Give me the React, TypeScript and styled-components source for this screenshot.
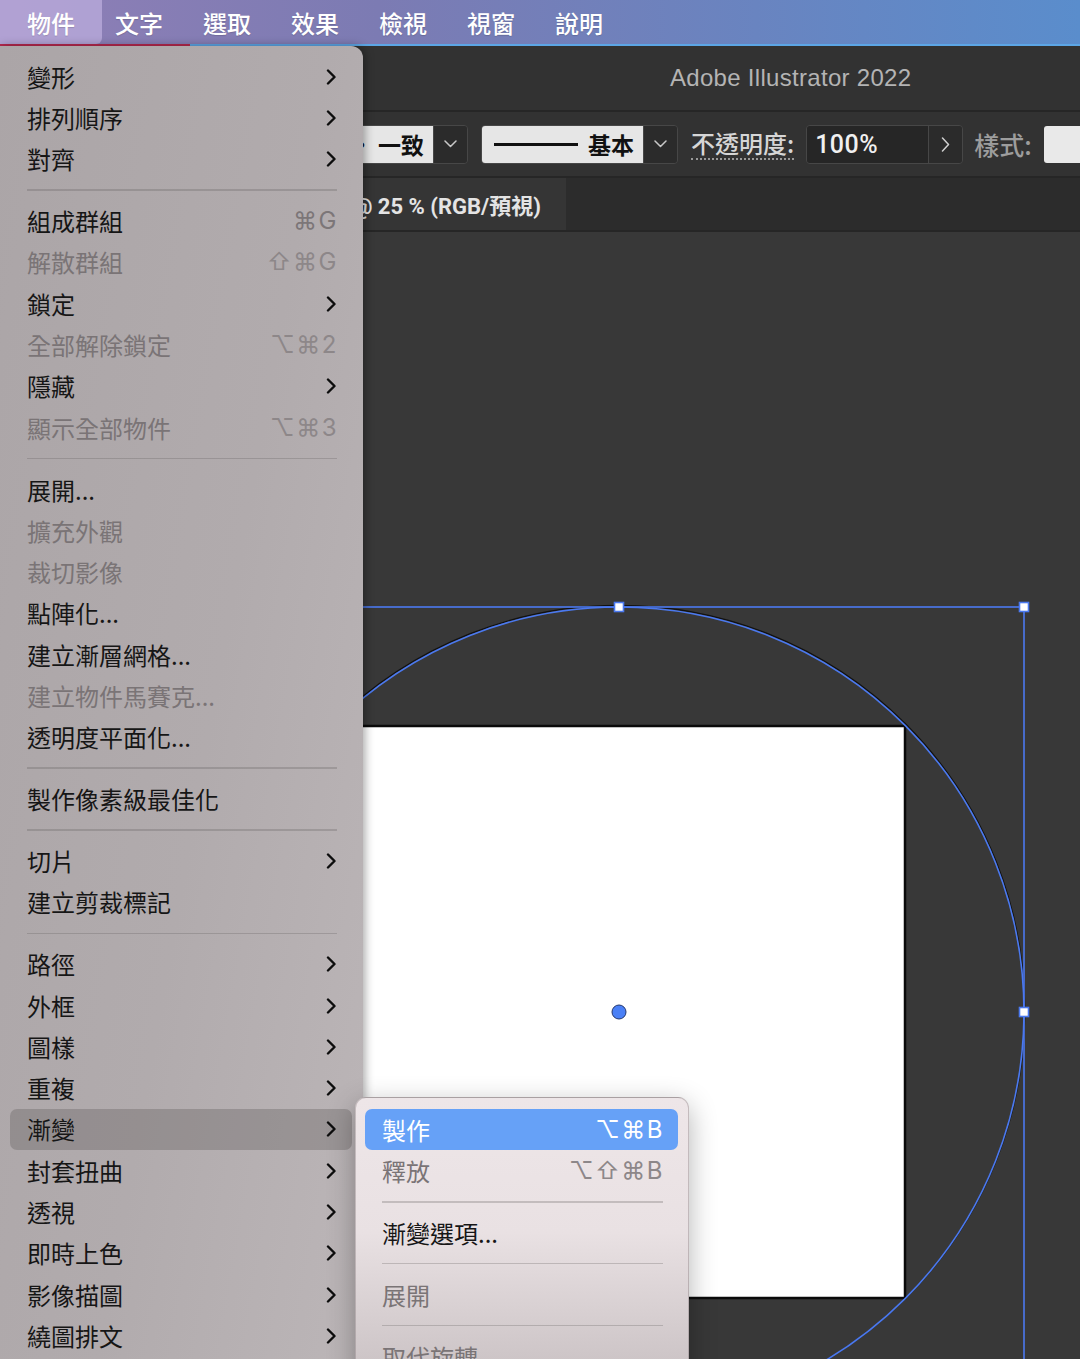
import React, { FC } from 'react';
import styled, { createGlobalStyle } from 'styled-components';

const GlobalStyle = createGlobalStyle`
  html, body {
    margin: 0;
    padding: 0;
    background: #383838;
    overflow: hidden;
  }
`;

const CJK = '"Noto Sans CJK TC", "Noto Sans", sans-serif';
const KEYS = '"Inter", "DejaVu Sans", "Noto Sans CJK TC", sans-serif';

type MenuEntry =
  | 'sep'
  | { label: string; disabled?: boolean; shortcut?: string; submenu?: boolean; active?: boolean };

const mainMenu: MenuEntry[] = [
  { label: '變形', submenu: true },
  { label: '排列順序', submenu: true },
  { label: '對齊', submenu: true },
  'sep',
  { label: '組成群組', shortcut: '⌘G' },
  { label: '解散群組', shortcut: '⇧⌘G', disabled: true },
  { label: '鎖定', submenu: true },
  { label: '全部解除鎖定', shortcut: '⌥⌘2', disabled: true },
  { label: '隱藏', submenu: true },
  { label: '顯示全部物件', shortcut: '⌥⌘3', disabled: true },
  'sep',
  { label: '展開...' },
  { label: '擴充外觀', disabled: true },
  { label: '裁切影像', disabled: true },
  { label: '點陣化...' },
  { label: '建立漸層網格...' },
  { label: '建立物件馬賽克...', disabled: true },
  { label: '透明度平面化...' },
  'sep',
  { label: '製作像素級最佳化' },
  'sep',
  { label: '切片', submenu: true },
  { label: '建立剪裁標記' },
  'sep',
  { label: '路徑', submenu: true },
  { label: '外框', submenu: true },
  { label: '圖樣', submenu: true },
  { label: '重複', submenu: true },
  { label: '漸變', submenu: true, active: true },
  { label: '封套扭曲', submenu: true },
  { label: '透視', submenu: true },
  { label: '即時上色', submenu: true },
  { label: '影像描圖', submenu: true },
  { label: '繞圖排文', submenu: true },
];

const blendMenu: MenuEntry[] = [
  { label: '製作', shortcut: '⌥⌘B', active: true },
  { label: '釋放', shortcut: '⌥⇧⌘B', disabled: true },
  'sep',
  { label: '漸變選項...' },
  'sep',
  { label: '展開', disabled: true },
  'sep',
  { label: '取代旋轉', disabled: true },
];

const menuBarItems = ['物件', '文字', '選取', '效果', '檢視', '視窗', '說明'];

/* ---------- frame ---------- */

const Screen = styled.div`
  position: relative;
  width: 1080px;
  height: 1359px;
  overflow: hidden;
  display: flex;
  flex-direction: column;
  background: #383838;
`;

const MenuBar = styled.div`
  position: relative;
  height: 46px;
  flex: none;
  display: flex;
  align-items: stretch;
  background: linear-gradient(90deg, #8f7fb6 0%, #7c7bb3 35%, #6984c0 70%, #5a8dcc 100%);

  &::after {
    content: '';
    position: absolute;
    left: 0;
    right: 0;
    bottom: 0;
    height: 2px;
    background: linear-gradient(90deg, #b5294f 0 190px, #5ca6e6 190px);
  }
`;

const MenuBarItem = styled.div<{ $active?: boolean }>`
  display: flex;
  align-items: center;
  padding: 0 ${(p) => (p.$active ? '27px' : '20px')};
  margin-right: ${(p) => (p.$active ? '-7px' : '0')};
  margin-bottom: 2px;
  border-radius: 0 0 6px 0;
  background: ${(p) => (p.$active ? 'rgba(205, 190, 235, 0.55)' : 'transparent')};
  color: #ffffff;
  font-family: ${CJK};
  font-size: 24px;
  font-weight: 500;
  text-shadow: 0 1px 1px rgba(0, 0, 0, 0.15);
`;

const Workspace = styled.div`
  flex: 1;
  display: flex;
  flex-direction: column;
  min-height: 0;
`;

const TitleBar = styled.div`
  height: 64px;
  flex: none;
  display: flex;
  align-items: center;
  padding-left: 670px;
  background: #323232;
`;

const Title = styled.div`
  color: #b4b4b4;
  font-family: "Liberation Sans", Arial, sans-serif;
  font-size: 24px;
  letter-spacing: 0.3px;
`;

/* ---------- control bar ---------- */

const ControlBar = styled.div`
  height: 64px;
  flex: none;
  display: flex;
  align-items: center;
  padding-left: 330px;
  border-top: 2px solid #262626;
  background: #323232;
  white-space: nowrap;
`;

const Combo = styled.div<{ $gap?: number }>`
  display: flex;
  height: 37px;
  margin-right: ${(p) => p.$gap ?? 13}px;
  border: 1px solid #474747;
  border-radius: 4px;
  overflow: hidden;
  flex: none;
`;

const ComboValue = styled.div<{ $w: number; $dark?: boolean }>`
  width: ${(p) => p.$w}px;
  display: flex;
  align-items: center;
  justify-content: ${(p) => (p.$dark ? 'flex-start' : 'flex-end')};
  gap: 10px;
  padding: ${(p) => (p.$dark ? '0 0 0 8px' : '0 9px 0 0')};
  box-sizing: border-box;
  background: ${(p) => (p.$dark ? '#262626' : '#e6e6e6')};
  color: ${(p) => (p.$dark ? '#f0f0f0' : '#111111')};
  font-family: ${(p) => (p.$dark ? '"Roboto", Arial, sans-serif' : CJK)};
  font-size: ${(p) => (p.$dark ? 25 : 23)}px;
  font-weight: ${(p) => (p.$dark ? 500 : 700)};
  letter-spacing: ${(p) => (p.$dark ? '0.5px' : '0')};
`;

const ComboButton = styled.div`
  width: 33px;
  display: flex;
  align-items: center;
  justify-content: center;
  background: #2b2b2b;
  border-left: 1px solid #474747;
`;

const StrokeLine = styled.div`
  width: 84px;
  height: 3px;
  background: #111;
`;

const FieldLabel = styled.div<{ $dotted?: boolean; $dim?: boolean }>`
  margin-right: 12px;
  color: ${(p) => (p.$dim ? '#9d9d9d' : '#d6d6d6')};
  font-family: ${CJK};
  font-size: ${(p) => (p.$dim ? 25 : 24)}px;
  font-weight: 500;
  line-height: 30px;
  border-bottom: ${(p) => (p.$dotted ? '2px dotted #9a9a9a' : 'none')};
`;

const Swatch = styled.div`
  width: 50px;
  height: 37px;
  flex: none;
  background: #e9e9e9;
  border-radius: 3px;
`;

/* ---------- document tab ---------- */

const TabBar = styled.div`
  height: 52px;
  flex: none;
  display: flex;
  border-top: 2px solid #262626;
  border-bottom: 2px solid #262626;
  background: #2c2c2c;
`;

const DocTab = styled.div`
  width: 566px;
  display: flex;
  align-items: center;
  justify-content: flex-end;
  padding-right: 25px;
  box-sizing: border-box;
  background: #353535;
  color: #e4e4e4;
  font-family: "Roboto", "Noto Sans CJK TC", sans-serif;
  font-size: 22px;
  font-weight: 700;
  white-space: nowrap;
`;

const Canvas = styled.div`
  flex: 1;
  min-height: 0;
  background: #383838;
  overflow: hidden;

  svg {
    display: block;
  }
`;

/* ---------- menus ---------- */

const Dropdown = styled.div`
  position: absolute;
  left: 0;
  top: 46px;
  width: 363px;
  height: 1340px;
  padding: 10px 11px 0 10px;
  box-sizing: border-box;
  border-radius: 0 12px 0 0;
  background: linear-gradient(100deg, #aba5a7 0%, #b1abad 55%, #bcb6b8 100%);
  box-shadow: 2px 0 10px rgba(0, 0, 0, 0.35);
`;

const SubMenu = styled.div`
  position: absolute;
  left: 355px;
  top: 1097px;
  width: 334px;
  height: 300px;
  padding: 11px 10px 0 9px;
  box-sizing: border-box;
  border-radius: 11px;
  border: 1px solid rgba(120, 110, 112, 0.35);
  background: linear-gradient(180deg, #eee6e8 0%, #e9e1e3 45%, #cfc7c9 85%, #c4bcbe 100%);
  box-shadow: 0 8px 28px rgba(0, 0, 0, 0.3);
`;

const Row = styled.div<{ $disabled?: boolean; $active?: boolean; $accent?: boolean }>`
  height: 41.3px;
  display: flex;
  align-items: center;
  justify-content: space-between;
  padding: 0 15px 0 17px;
  border-radius: 7px;
  background: ${(p) => (!p.$active ? 'transparent' : p.$accent ? '#66a1f7' : 'rgba(110, 104, 106, 0.42)')};
  color: ${(p) => (p.$active && p.$accent ? '#ffffff' : p.$disabled ? '#7a7476' : '#161616')};
  font-family: ${CJK};
  font-size: 24px;
  line-height: 1;
  white-space: nowrap;
`;

const Shortcut = styled.span<{ $tone: string }>`
  color: ${(p) => p.$tone};
  font-family: ${KEYS};
  font-size: 24px;
  letter-spacing: 1.5px;
  margin-right: -1px;
`;

const Separator = styled.div`
  height: 1.5px;
  margin: 9.5px 15px 9.6px 17px;
  background: rgba(95, 88, 90, 0.28);
`;

const Chevron: FC = () => (
  <svg width="11" height="16" viewBox="0 0 11 16">
    <path d="M2 1.5 L8.5 8 L2 14.5" fill="none" stroke="#0d0d0d" strokeWidth="2.4" strokeLinecap="round" strokeLinejoin="round" />
  </svg>
);

const ChevronDown: FC = () => (
  <svg width="13" height="8" viewBox="0 0 13 8">
    <path d="M1 1 L6.5 6.5 L12 1" fill="none" stroke="#c8c8c8" strokeWidth="1.5" strokeLinecap="round" strokeLinejoin="round" />
  </svg>
);

const ChevronRight: FC = () => (
  <svg width="9" height="15" viewBox="0 0 9 15">
    <path d="M1.5 1 L7.5 7.5 L1.5 14" fill="none" stroke="#d0d0d0" strokeWidth="1.5" strokeLinecap="round" strokeLinejoin="round" />
  </svg>
);

const MenuList: FC<{ items: MenuEntry[]; accent?: boolean }> = ({ items, accent }) => {
  return (
    <>
      {items.map((item, i) => {
        if (item === 'sep') return <Separator key={`sep-${i}`} />;
        const tone = item.active && accent ? '#ffffff' : item.disabled ? '#8d8789' : '#7c7678';
        return (
          <Row key={item.label} $disabled={item.disabled} $active={item.active} $accent={accent}>
            <span>{item.label}</span>
            {item.shortcut && <Shortcut $tone={tone}>{item.shortcut}</Shortcut>}
            {item.submenu && <Chevron />}
          </Row>
        );
      })}
    </>
  );
};

const Artwork: FC = () => {
  const cx = 619;
  const cy = 780;
  const r = 405;
  const blue = '#4b79ef';
  const handles: [number, number][] = [[cx, cy - r], [cx + r, cy - r], [cx + r, cy], [cx - r, cy - r], [cx - r, cy]];
  return (
    <svg width="1080" height="1127" viewBox="0 0 1080 1127">
      <rect x="333" y="494" width="572" height="572" fill="#ffffff" stroke="#0a0a0a" strokeWidth="2.5" />
      <circle cx={cx} cy={cy - 0.8} r={r + 0.8} fill="none" stroke="#111111" strokeWidth="1.2" />
      <circle cx={cx} cy={cy} r={r} fill="none" stroke={blue} strokeWidth="1.6" />
      <rect x={cx - r} y={cy - r} width={2 * r} height={2 * r} fill="none" stroke={blue} strokeWidth="1.6" />
      {handles.map(([x, y]) => (
        <rect key={`${x}-${y}`} x={x - 4.5} y={y - 4.5} width="9" height="9" fill="#ffffff" stroke={blue} strokeWidth="1.6" />
      ))}
      <circle cx={cx} cy={cy} r="7" fill="#4a80f6" stroke="#23376e" strokeWidth="1" />
    </svg>
  );
};

const App: FC = () => {
  return (
    <Screen>
      <GlobalStyle />
      <MenuBar>
        {menuBarItems.map((name, i) => (
          <MenuBarItem key={name} $active={i === 0}>{name}</MenuBarItem>
        ))}
      </MenuBar>

      <Workspace>
        <TitleBar>
          <Title>Adobe Illustrator 2022</Title>
        </TitleBar>

        <ControlBar>
          <Combo>
            <ComboValue $w={102}>· 一致</ComboValue>
            <ComboButton><ChevronDown /></ComboButton>
          </Combo>
          <Combo>
            <ComboValue $w={161}>
              <StrokeLine />
              基本
            </ComboValue>
            <ComboButton><ChevronDown /></ComboButton>
          </Combo>
          <FieldLabel $dotted>不透明度:</FieldLabel>
          <Combo $gap={11}>
            <ComboValue $w={121} $dark>100%</ComboValue>
            <ComboButton><ChevronRight /></ComboButton>
          </Combo>
          <FieldLabel $dim>樣式:</FieldLabel>
          <Swatch />
        </ControlBar>

        <TabBar>
          <DocTab>未命名-1 @ 25 % (RGB/預視)</DocTab>
        </TabBar>

        <Canvas>
          <Artwork />
        </Canvas>
      </Workspace>

      <Dropdown>
        <MenuList items={mainMenu} />
      </Dropdown>

      <SubMenu>
        <MenuList items={blendMenu} accent />
      </SubMenu>
    </Screen>
  );
};

export default App;
